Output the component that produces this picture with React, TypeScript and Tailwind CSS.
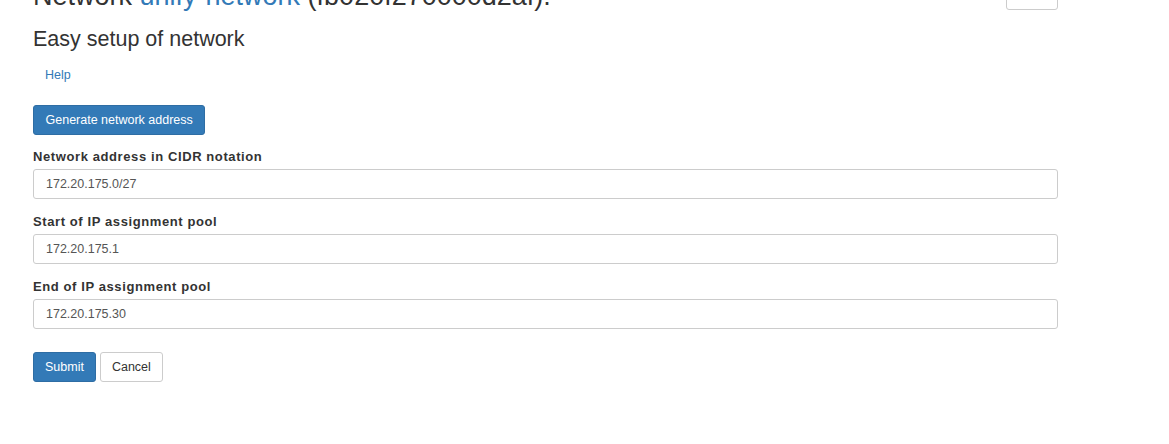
import { useState } from "react";

const fields = [
    { id: "cidr", label: "Network address in CIDR notation", value: "172.20.175.0/27" },
    { id: "start", label: "Start of IP assignment pool", value: "172.20.175.1" },
    { id: "end", label: "End of IP assignment pool", value: "172.20.175.30" },
];

function App() {
    const [values, setValues] = useState<Record<string, string>>(
        Object.fromEntries(fields.map(f => [f.id, f.value]))
    );

    return (
        <div className="bg-white h-[444px] overflow-hidden font-['Liberation_Sans',Arial,sans-serif] text-[12.5px] text-[#333]">
            <div className="ml-[33px] w-[1025px]">
                <div className="flex justify-between items-start -mt-[20px] h-[30px]">
                    <h2 className="mt-[2.2px] text-[27px] leading-[1.1] whitespace-nowrap">
                        Network <a className="text-[#337ab7]" href="#">unify-network</a> (fb020f270000d2af).
                    </h2>
                    <button className="h-[30px] w-[52px] border border-[#ccc] rounded-[3px] bg-white" />
                </div>

                <h3 className="mt-[18px] text-[21.5px] leading-[1.1]">Easy setup of network</h3>

                <div className="mt-[15px] pl-[12px] leading-[17.5px]">
                    <a className="text-[#337ab7]" href="#">Help</a>
                </div>

                <button className="mt-[21px] h-[30px] px-[11.5px] bg-[#337ab7] border border-[#2e6da4] rounded-[3px] text-white leading-none">
                    Generate network address
                </button>

                <form className="mt-[13px]" onSubmit={e => e.preventDefault()}>
                    {fields.map(f => (
                        <div key={f.id} className="mb-[14px]">
                            <label htmlFor={f.id} className="block mb-[4px] text-[13px] leading-[17px] font-bold tracking-[0.6px]">
                                {f.label}
                            </label>
                            <input
                                id={f.id}
                                className="block w-full h-[30px] px-[12px] border border-[#ccc] rounded-[3px] text-[#555] outline-none"
                                value={values[f.id]}
                                onChange={e => setValues({ ...values, [f.id]: e.target.value })}
                            />
                        </div>
                    ))}
                    <div className="mt-[23px] flex gap-[4px]">
                        <button type="submit" className="h-[30px] px-[11px] bg-[#337ab7] border border-[#2e6da4] rounded-[3px] text-white leading-none">
                            Submit
                        </button>
                        <button type="button" className="h-[30px] px-[11px] bg-white border border-[#ccc] rounded-[3px] text-[#333] leading-none">
                            Cancel
                        </button>
                    </div>
                </form>
            </div>
        </div>
    );
}
export default App;
